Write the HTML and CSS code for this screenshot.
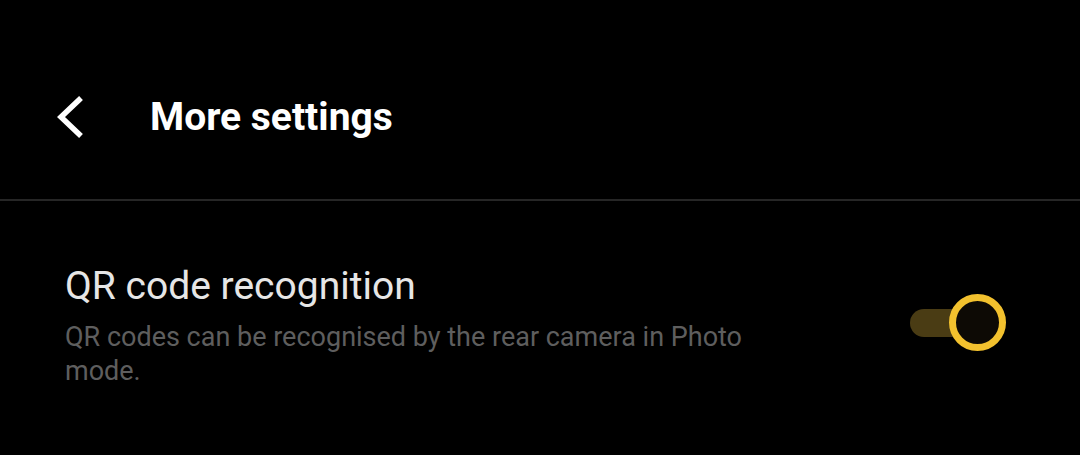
FILE: index.html
```html
<!DOCTYPE html>
<html>
<head>
<meta charset="utf-8">
<link rel="stylesheet" href="styles.css">
</head>
<body>
<div class="screen">
  <header class="topbar">
    <div class="bar-inner">
      <button class="back" aria-label="Back">
        <svg width="30" height="44" viewBox="0 0 30 44"><path d="M22 5 L4 22 L22 39" fill="none" stroke="#fff" stroke-width="5.5" stroke-linecap="square" stroke-linejoin="miter"/></svg>
      </button>
      <h1 class="title">More settings</h1>
    </div>
  </header>
  <div class="divider"></div>
  <div class="row">
    <div class="text">
      <div class="row-title">QR code recognition</div>
      <div class="row-sub">QR codes can be recognised by the rear camera in Photo mode.</div>
    </div>
    <div class="switch">
      <div class="track"></div>
      <div class="knob"></div>
    </div>
  </div>
</div>
</body>
</html>
```
FILE: styles.css
```css
html, body {
  margin: 0;
  padding: 0;
  background: #000;
}
.screen {
  width: 1080px;
  height: 455px;
  background: #000;
  font-family: Roboto, "Noto Sans", sans-serif;
  overflow: hidden;
}
.topbar {
  height: 199px;
  box-sizing: border-box;
  padding: 94px 0 0 57px;
}
.bar-inner {
  display: flex;
  align-items: center;
  height: 46px;
}
.back {
  background: none;
  border: 0;
  padding: 0;
  width: 30px;
  height: 44px;
  display: flex;
}
.title {
  margin: 0 0 0 63px;
  color: #fff;
  font-size: 39px;
  line-height: 46px;
  font-weight: 700;
}
.divider {
  height: 2px;
  background: #262626;
}
.row {
  display: flex;
  align-items: center;
  padding: 62px 74px 0 65px;
}
.text {
  flex: 1;
}
.row-title {
  color: #e6e6e6;
  font-size: 39px;
  line-height: 46px;
}
.row-sub {
  color: #5e5e5e;
  font-size: 27px;
  line-height: 34px;
  width: 710px;
  margin-top: 11px;
}
.switch {
  position: relative;
  width: 96px;
  height: 58px;
  margin-top: -6px;
}
.track {
  position: absolute;
  left: 0;
  top: 15px;
  width: 80px;
  height: 28px;
  border-radius: 14px;
  background: #4a3c14;
}
.knob {
  position: absolute;
  right: 0;
  top: 0;
  width: 57px;
  height: 57px;
  box-sizing: border-box;
  border-radius: 50%;
  border: 7px solid #f2c12e;
  background: #0d0a05;
}
```
